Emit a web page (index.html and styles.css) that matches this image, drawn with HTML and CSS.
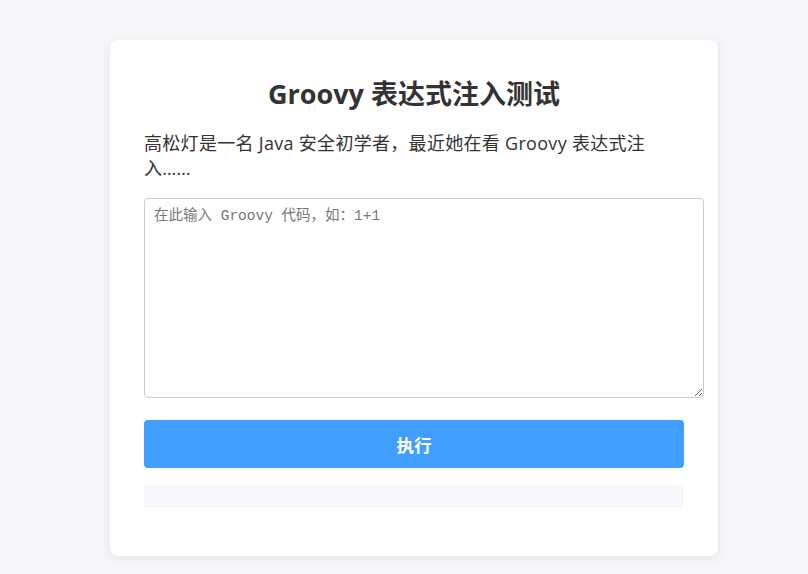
FILE: index.html
```html
<!DOCTYPE html>
<html lang="zh-CN">
<head>
    <meta charset="UTF-8">
    <meta name="viewport" content="width=device-width, initial-scale=1.0">
    <title>Groovy 表达式注入测试</title>
    <link rel="stylesheet" href="styles.css">
</head>
<body>
    <div class="container">
        <h1>Groovy 表达式注入测试</h1>
        <p class="intro">高松灯是一名 Java 安全初学者，最近她在看 Groovy 表达式注入……</p>
        <textarea id="code" placeholder="在此输入 Groovy 代码，如：1+1"></textarea>
        <button id="run" onclick="runCode()">执行</button>
        <div id="result" class="result"></div>
    </div>

    <script>
        function runCode() {
            var code = document.getElementById("code").value;
            document.getElementById("result").textContent = code ? "执行中..." : "";
        }
    </script>
</body>
</html>
```

FILE: styles.css
```css
body {
    font-family: "Open Sans", "Noto Sans CJK SC", sans-serif;
    background-color: #f5f6fa;
    margin: 0;
    padding: 40px 0 20px 20px;
    color: #333;
}
.container {
    width: 540px;
    margin: 0 auto;
    padding: 35px 34px 48px;
    background-color: #fff;
    border-radius: 8px;
    box-shadow: 0 2px 12px rgba(0, 0, 0, 0.08);
}
h1 {
    margin: 0;
    font-size: 27px;
    line-height: 38px;
    text-align: center;
    color: #333;
}
.intro {
    max-width: 510px;
    margin: 18px 0 17px;
    font-size: 18px;
    line-height: 25px;
    letter-spacing: 0.3px;
}
textarea {
    display: block;
    width: 100%;
    height: 182px;
    padding: 7px 9px 9px;
    border: 1px solid #ccc;
    border-radius: 4px;
    font-family: "Liberation Mono", "Noto Sans CJK SC", monospace;
    font-size: 14.5px;
    line-height: 20px;
    color: #333;
}
textarea::placeholder {
    color: #777;
}
button {
    display: block;
    width: 100%;
    height: 48px;
    margin-top: 22px;
    border: none;
    border-radius: 4px;
    background-color: #409eff;
    color: #fff;
    font-family: "Noto Sans CJK SC", sans-serif;
    font-size: 17.6px;
    font-weight: 600;
    cursor: pointer;
}
.result {
    margin-top: 17px;
    min-height: 23px;
    border-radius: 4px;
    background-color: #f5f7fa;
}
```
